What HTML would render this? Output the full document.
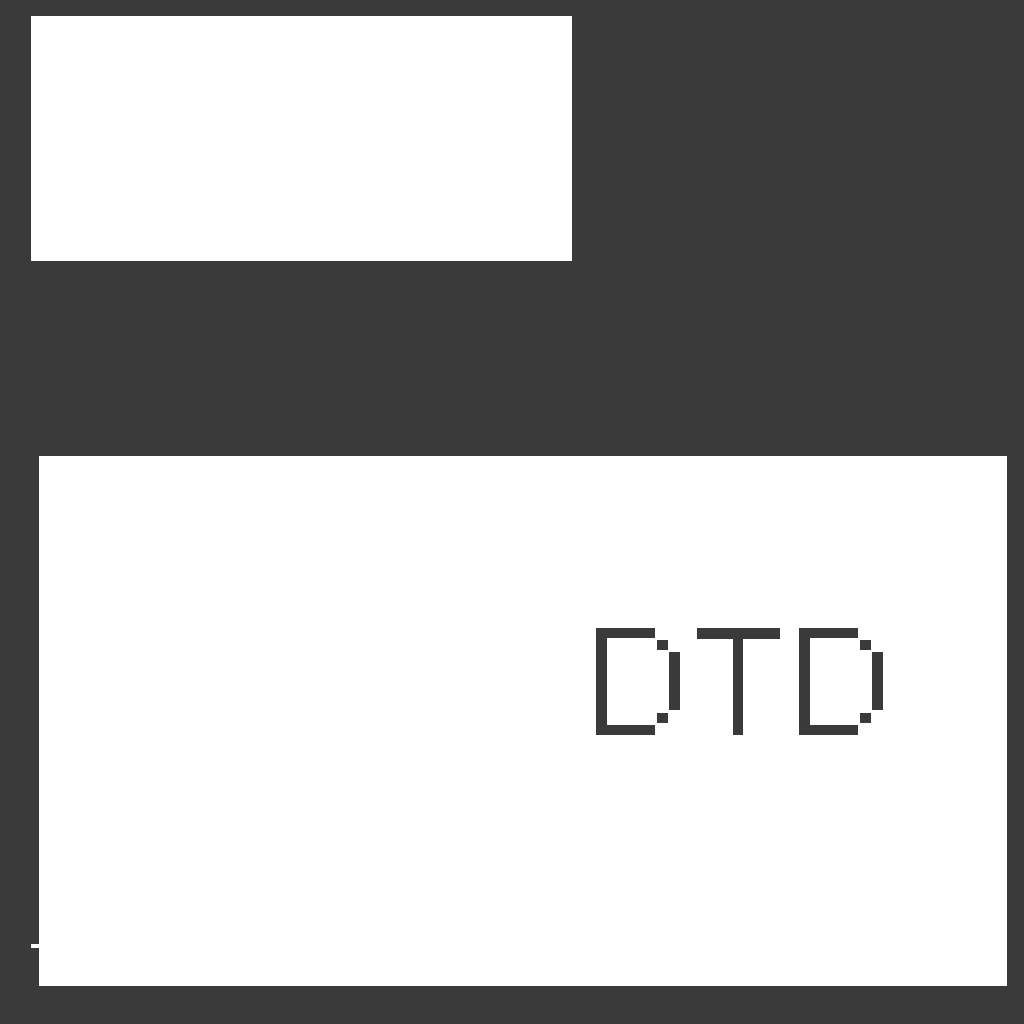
<!DOCTYPE html><html><head><style>
body{margin:0;width:1024px;height:1024px;background:#3a3a3a;position:relative;overflow:hidden}
div{position:absolute;background:#fff}
.d{background:#3a3a3a}
</style></head><body>
<div style="left:31px;top:16px;width:541px;height:245px"></div>
<div style="left:39px;top:456px;width:968px;height:530px"></div>
<div style="left:31px;top:944px;width:8px;height:4px"></div>
<svg style="position:absolute;left:0;top:0" width="1024" height="1024" fill="#3a3a3a">
<title>DTD</title>
<g id="D"><rect x="596" y="628" width="11" height="107"/><rect x="596" y="628" width="59" height="10"/><rect x="596" y="725" width="59" height="10"/><rect x="657" y="640" width="11" height="10"/><rect x="657" y="713" width="11" height="10"/><rect x="669" y="652" width="11" height="58"/></g>
<rect x="697" y="628" width="83" height="11"/><rect x="733" y="628" width="10" height="107"/>
<use href="#D" x="203"/>
</svg>
</body></html>
